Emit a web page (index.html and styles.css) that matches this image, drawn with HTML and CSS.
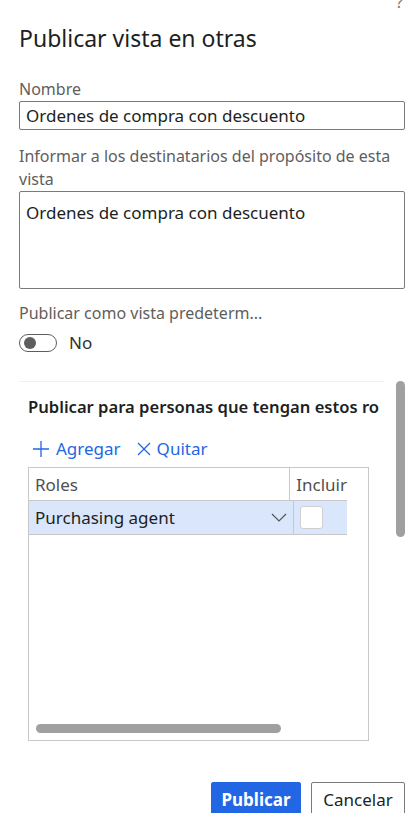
FILE: index.html
```html
<!DOCTYPE html>
<html lang="es">
<head>
    <title>Publicar vista</title>
    <link rel="stylesheet" href="styles.css">
</head>
<body>
    <span class="help">?</span>

    <h1 class="title">Publicar vista en otras</h1>

    <div class="field">
        <label class="label">Nombre</label>
        <div class="input">Ordenes de compra con descuento</div>
    </div>

    <div class="field">
        <label class="label">Informar a los destinatarios del propósito de esta vista</label>
        <div class="textarea">Ordenes de compra con descuento</div>
    </div>

    <div class="field">
        <label class="label">Publicar como vista predeterm...</label>
        <div class="toggle-row">
            <span class="toggle"><span class="knob"></span></span>
            <span class="toggle-text">No</span>
        </div>
    </div>

    <div class="section">
        <div class="section-body">
            <h2 class="section-title">Publicar para personas que tengan estos ro</h2>

            <div class="actions">
                <span class="action">
                    <svg width="18" height="18" viewBox="0 0 18 18"><path d="M9 1v16M1 9h16" stroke="#2266e3" stroke-width="1.3" fill="none"/></svg>
                    Agregar
                </span>
                <span class="action">
                    <svg width="14" height="14" viewBox="0 0 14 14"><path d="M1 1l12 12M13 1L1 13" stroke="#2266e3" stroke-width="1.3" fill="none"/></svg>
                    Quitar
                </span>
            </div>

            <div class="grid">
                <div class="grid-row grid-head">
                    <div class="cell cell-role">Roles</div>
                    <div class="cell cell-check">Incluir</div>
                </div>
                <div class="grid-row grid-selected">
                    <div class="cell cell-role">
                        <span>Purchasing agent</span>
                        <svg width="16" height="10" viewBox="0 0 16 10"><path d="M1 1l7 7 7-7" stroke="#555" stroke-width="1.2" fill="none"/></svg>
                    </div>
                    <div class="cell cell-check"><span class="checkbox"></span></div>
                </div>
                <div class="hscroll"><span class="hthumb"></span></div>
            </div>
        </div>
        <div class="vscroll"></div>
    </div>

    <div class="footer">
        <button class="btn btn-primary">Publicar</button>
        <button class="btn">Cancelar</button>
    </div>
</body>
</html>
```

FILE: styles.css
```css
/* General styling */
body {
    font-family: "Noto Sans", "Open Sans", sans-serif;
    margin: 0;
    padding: 0 10px 0 19px;
    background-color: white;
    color: #201f1e;
    position: relative;
    width: 386px;
    height: 813px;
    overflow: hidden;
}

.help {
    position: absolute;
    top: -9px;
    right: 12px;
    font-size: 16px;
    color: #777;
}

.title {
    margin: 23px 0 0 0;
    font-size: 23px;
    font-weight: 400;
    line-height: 30px;
}

.label {
    display: block;
    font-size: 16px;
    line-height: 23px;
    color: #605e5c;
}

.title + .field {
    margin-top: 25px;
}

.input {
    height: 27px;
    border: 1px solid #7a7a7a;
    border-radius: 2px;
    font-size: 17px;
    line-height: 27px;
    padding: 0 6px;
    margin-bottom: 15px;
}

.textarea {
    border: 1px solid #7a7a7a;
    border-radius: 2px;
    font-size: 17px;
    line-height: 22px;
    padding: 10px 6px 0 6px;
    box-sizing: border-box;
    height: 98px;
    margin-bottom: 13px;
}

.toggle-row {
    display: flex;
    align-items: center;
    gap: 12px;
    margin-top: 6px;
}

.toggle {
    width: 32px;
    height: 16px;
    border: 1px solid #605e5c;
    border-radius: 10px;
    display: flex;
    align-items: center;
    padding-left: 4px;
}

.knob {
    width: 12px;
    height: 12px;
    border-radius: 50%;
    background-color: #605e5c;
}

.toggle-text {
    font-size: 17px;
    color: #323130;
}

/* Roles section */
.section {
    display: flex;
    margin-top: 27px;
    height: 360px;
}

.section-body {
    width: 360px;
    border-top: 1px solid #f0f0f0;
    padding-left: 9px;
}

.section-title {
    font-size: 16.6px;
    font-weight: 600;
    margin: 14px 0 0 0;
    line-height: 22px;
    white-space: nowrap;
    overflow: hidden;
}

.actions {
    display: flex;
    gap: 16px;
    margin-top: 20px;
    padding-left: 4px;
}

.action {
    display: flex;
    align-items: center;
    gap: 6px;
    color: #2266e3;
    font-size: 17px;
    line-height: 22px;
}

.grid {
    width: 339px;
    height: 272px;
    border: 1px solid #c8c8c8;
    margin-top: 7px;
    position: relative;
}

.grid-row {
    display: flex;
    width: 318px;
}

.grid-head {
    height: 32px;
    border-bottom: 1px solid #c8c8c8;
}

.grid-selected {
    height: 33px;
    background-color: #dae6fb;
    border-bottom: 1px solid #c8c8c8;
}

.cell {
    font-size: 17px;
    display: flex;
    align-items: center;
}

.grid-head .cell {
    color: #505050;
}

.cell-role {
    width: 252px;
    padding: 0 6px;
    justify-content: space-between;
    border-right: 1px solid #c8c8c8;
}

.cell-check {
    flex: 1;
    padding-left: 6px;
}

.checkbox {
    width: 21px;
    height: 21px;
    background-color: white;
    border: 1px solid #d0d0d0;
    border-radius: 3px;
}

.hscroll {
    position: absolute;
    left: 7px;
    bottom: 7px;
}

.hthumb {
    display: block;
    width: 245px;
    height: 9px;
    border-radius: 5px;
    background-color: #a0a0a0;
}

.vscroll {
    width: 9px;
    height: 156px;
    border-radius: 5px;
    background-color: #a0a0a0;
    margin-left: 12px;
}

/* Footer buttons */
.footer {
    display: flex;
    justify-content: flex-end;
    gap: 10px;
    margin-top: 41px;
}

.btn {
    font-family: "Noto Sans", "Open Sans", sans-serif;
    font-size: 17px;
    height: 34px;
    padding: 0 8px;
    border: 1px solid #7a7a7a;
    border-radius: 2px;
    background-color: white;
    color: #201f1e;
}

.btn-primary {
    width: 90px;
    background-color: #2266e3;
    border-color: #2266e3;
    color: white;
    font-weight: 700;
}

.btn:last-child {
    width: 94px;
}
```
